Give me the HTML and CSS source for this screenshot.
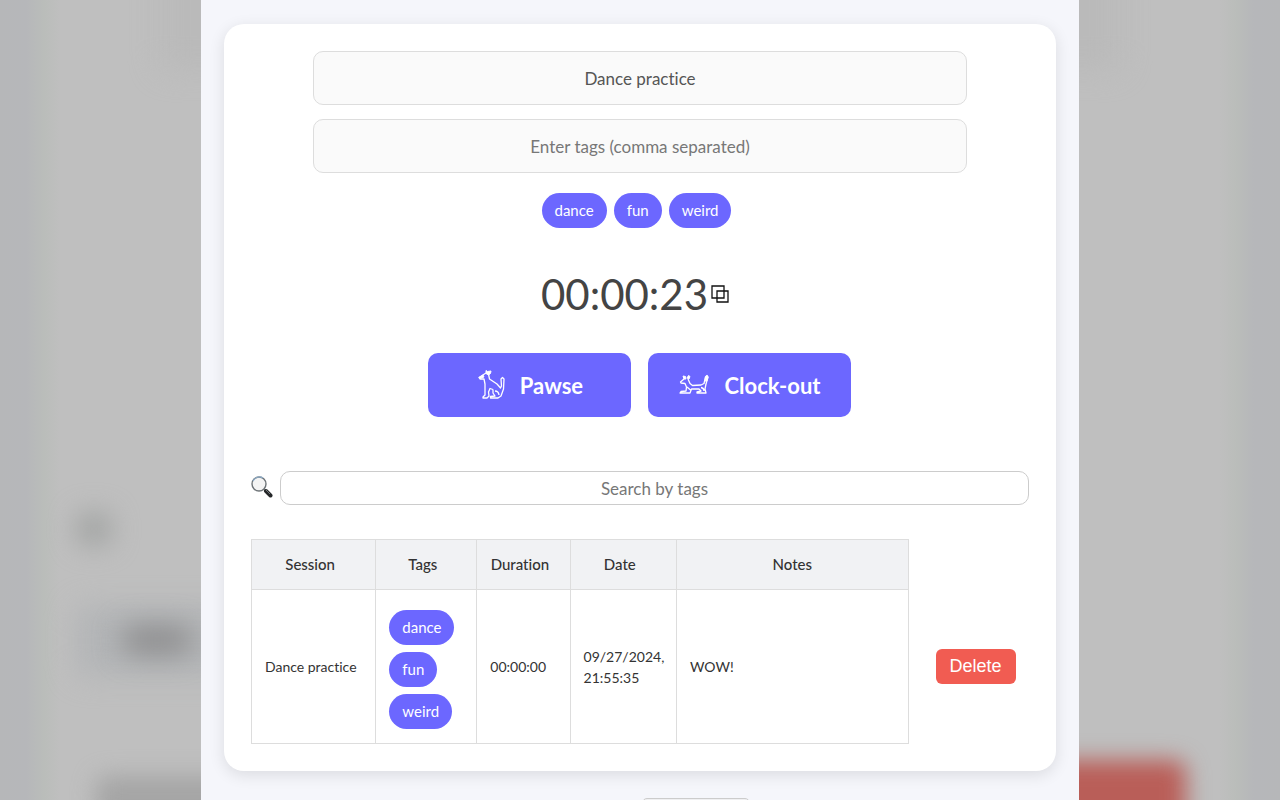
FILE: index.html
```html
<!DOCTYPE html>
<html lang="en">
<head>
<meta charset="utf-8">
<title>Session timer</title>
<link rel="stylesheet" href="styles.css">
</head>
<body>
<div class="stage">
  <div class="backdrop" aria-hidden="true">
    <span class="blob blob-card"></span>
    <span class="blob blob-search"></span>
    <span class="blob blob-head"></span>
    <span class="blob blob-title"></span>
    <span class="blob blob-row"></span>
    <span class="blob blob-delete"></span>
  </div>
  <div class="panel">
    <main class="card">
      <div class="fields">
        <input class="field" type="text" aria-label="Session name" value="Dance practice">
        <input class="field" type="text" aria-label="Tags" placeholder="Enter tags (comma separated)">
      </div>
      <div class="tags">
        <span class="tag">dance</span><span class="tag">fun</span><span class="tag">weird</span>
      </div>
      <div class="timer">
        <span class="time">00:00:23</span>
        <button class="copy" type="button" aria-label="Copy time">
          <svg width="18" height="18" viewBox="0 0 18 18" fill="none" stroke="#111" stroke-width="1.3"><path d="M1 1h12v12H1zM6 6h11v11H6z"/></svg>
        </button>
      </div>
      <div class="actions">
        <button class="action" type="button">
          <svg class="dog" width="28" height="32" viewBox="0 0 28 32"><path d="M9 4L2 8.500L3 10L7 10L8 15L8 26L6 28L6 29L10 29L12 27L11.500 23L13 19.500L16 20.500M11.500 5L12.500 10L20 15L23.500 19L24.500 17L24 10L25.500 8.500L27 10L26.500 20L24 27L21 29L13.500 29L13.500 27.500L18 27L16 24L16 20.500M18 22Q21.500 22 22 26"/><path class="solid" d="M9 1.500L10.500 2.500L14 2L13.500 4.500L11.500 6L9 4.500ZM2 8.500L6 6L7 8L3 9.500Z"/></svg>
          <span>Pawse</span>
        </button>
        <button class="action" type="button">
          <svg class="dog" width="30" height="32" viewBox="0 0 30 32"><path d="M5 10L1.500 13L2 14L6 14.500L7.500 18L7 22L2 22.500L1 24L11 24L12.500 20L20 20L22 22L18 23L18 24L27 24L26 20L27 15L29 8L28 6.500L26.500 8L25 14.500L22 16L13.500 16.500L11 14.500L9 10M8 18L11.500 21M22 18.500Q25 19 25 22"/><path class="solid" d="M4 7L6.500 7.500L7 10L5 10ZM8 9L9.500 6.500L11 7.500L10 10ZM26.500 8L28 6.500L29 8L28 12L26 12Z"/></svg>
          <span>Clock-out</span>
        </button>
      </div>
      <div class="search">
        <label for="search" aria-label="Search by tags">
          <svg width="22" height="24" viewBox="0 0 22 24"><path d="M13 13L15 15" stroke="#888" stroke-width="2"/><path d="M15 15L19.500 19.500" stroke="#252729" stroke-width="4" stroke-linecap="round"/><path d="M15 14L19 18" stroke="#73777a" stroke-width="1"/><circle cx="8" cy="8" r="7" fill="#f4f4f4" stroke="#6d7377" stroke-width="1.400"/><path d="M2 5A7 7 0 0 1 12 2" fill="none" stroke="#8dacc8" stroke-width="1.200"/></svg>
        </label>
        <input id="search" class="search-box" type="text" placeholder="Search by tags">
      </div>
      <table class="sessions">
        <colgroup><col class="c-session"><col class="c-tags"><col class="c-duration"><col class="c-date"><col class="c-notes"><col class="c-delete"></colgroup>
        <thead>
          <tr><th>Session</th><th>Tags</th><th>Duration</th><th>Date</th><th class="notes">Notes</th><td class="bare"></td></tr>
        </thead>
        <tbody>
          <tr>
            <td>Dance practice</td>
            <td><div class="tag-list"><span class="tag">dance</span><span class="tag">fun</span><span class="tag">weird</span></div></td>
            <td>00:00:00</td>
            <td>09/27/2024, 21:55:35</td>
            <td>WOW!</td>
            <td class="bare"><button class="delete" type="button">Delete</button></td>
          </tr>
        </tbody>
      </table>
    </main>
    <div class="footer"><button class="more" type="button" aria-label="More"></button></div>
  </div>
</div>
</body>
</html>
```
FILE: styles.css
```css
* { box-sizing: border-box; }
body { margin: 0; font-family: Lato, "Open Sans", sans-serif; font-size: 16px; font-variant-ligatures: none; color: #333; }
button, input { font: inherit; font-variant-ligatures: none; }
.stage { position: relative; height: 100vh; overflow: hidden; }

.backdrop {
  position: absolute; inset: 0; overflow: hidden;
  background: linear-gradient(90deg, #b6b7b9 0, #b6b7ba 26px, #babdba 44px, #bfbfbf 60px, #bfbfbf calc(100% - 60px), #babdba calc(100% - 44px), #b6b7ba calc(100% - 26px), #b6b7b9 100%);
}
.blob { position: absolute; border-radius: 12px; filter: blur(14px); }
.blob-card { left: 160px; right: 160px; top: -60px; height: 130px; background: #bababa; }
.blob-search { left: 76px; top: 512px; width: 36px; height: 34px; background: #a3a5a4; filter: blur(13px); }
.blob-head { left: 76px; top: 606px; width: 200px; height: 70px; background: #b3b5b7; }
.blob-title { left: 122px; top: 626px; width: 70px; height: 28px; background: #8c8c8d; filter: blur(14px); }
.blob-row { left: 96px; top: 776px; width: 140px; height: 50px; background: #a5a5a5; filter: blur(11px); }
.blob-delete { right: 94px; top: 760px; width: 180px; height: 70px; background: #b95e58; filter: blur(11px); }

.panel { position: relative; width: 68.6%; min-height: 100%; margin: 0 auto; padding: 24px 23px 0; background: #f5f6fb; }
.card { padding: 27px; border-radius: 20px; background: #fff; box-shadow: 0 4px 16px rgba(0, 0, 0, .11); }

.fields { display: flex; flex-direction: column; gap: 14px; width: 84%; margin: 0 auto; }
.field { width: 100%; height: 54px; padding: 0 14px; border: 1px solid #ddd; border-radius: 10px; background: #fafafa; color: #555; font-size: 17px; text-align: center; }
.field::placeholder, .search-box::placeholder { color: #777; opacity: 1; }

.tags { display: flex; justify-content: center; gap: 7px; margin-top: 20px; padding-right: 7px; }
.tag { padding: 0 13px; border-radius: 18px; background: #6c67ff; color: #fff; font-size: 15px; line-height: 35px; }

.timer { display: flex; align-items: center; justify-content: center; gap: 3px; margin-top: 36px; padding-right: 10px; }
.time { color: #444; font-size: 42px; line-height: 60px; }
.copy { display: flex; padding: 0; border: 0; background: none; }

.actions { display: flex; justify-content: center; gap: 17px; margin-top: 29px; }
.action { display: flex; align-items: center; justify-content: center; gap: 15px; width: 203px; height: 64px; border: 0; border-radius: 10px; background: #6c67ff; color: #fff; font-size: 22px; font-weight: 700; }
.dog { fill: none; stroke: #fff; stroke-width: 1.3; stroke-linejoin: round; }
.dog .solid { fill: #fff; stroke-width: 1; }

.search { display: flex; align-items: center; gap: 7px; margin-top: 54px; }
.search label { display: flex; }
.search-box { flex: 1; min-width: 0; height: 34px; border: 1px solid #ccc; border-radius: 10px; background: #fff; font-size: 17px; text-align: center; }

.sessions { width: 100%; margin-top: 34px; border-collapse: collapse; table-layout: fixed; font-size: 14px; line-height: 21px; }
.c-session { width: 16%; }
.c-tags { width: 13%; }
.c-duration { width: 12%; }
.c-date { width: 13.7%; }
.c-notes { width: 29.8%; }
.c-delete { width: 15.5%; }
.sessions th, .sessions td { padding: 14px 13px; border: 1px solid #ddd; }
.sessions th { padding-right: 20px; background: #f1f2f4; font-size: 15px; font-weight: 500; }
.sessions .notes { padding-right: 13px; }
.sessions thead tr { height: 50px; }
.sessions td { text-align: left; }
.sessions .bare { border: 0; text-align: right; }
.tag-list { display: flex; flex-direction: column; align-items: flex-start; gap: 7px; padding-top: 6px; }
.delete { width: 80px; height: 35px; padding: 0; border: 0; border-radius: 6px; background: #f15c52; color: #fff; font-family: "Liberation Sans", sans-serif; font-size: 18px; }

.footer { display: flex; justify-content: center; padding: 27px 0 0 113px; }
.more { width: 108px; height: 28px; border: 1px solid #ccc; border-radius: 5px; background: #f0f0f2; }
```
